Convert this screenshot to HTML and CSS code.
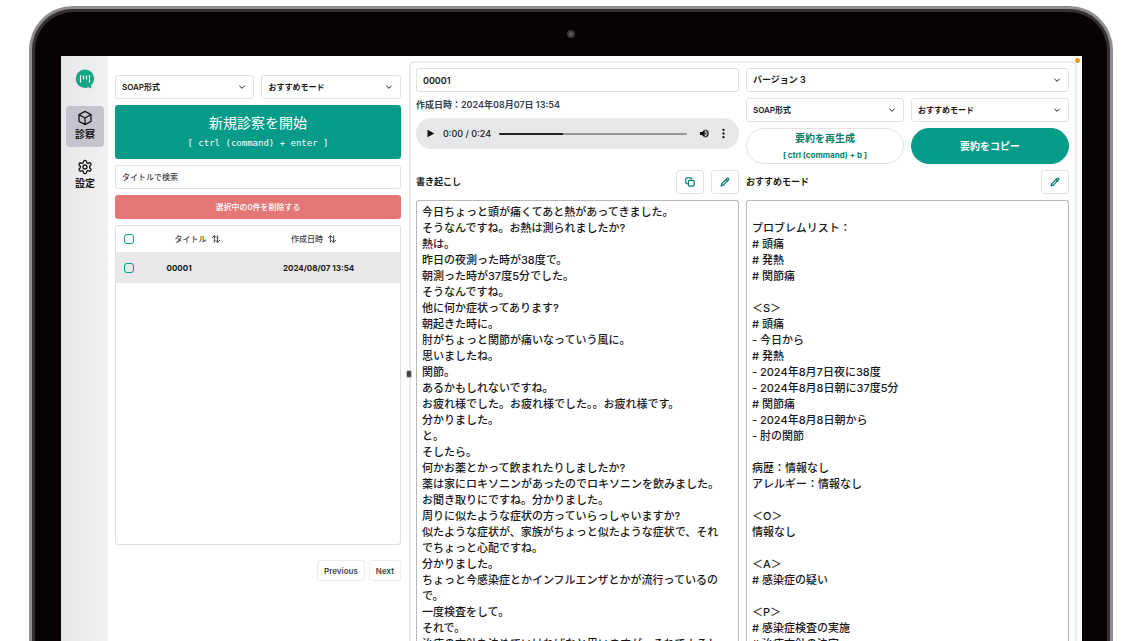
FILE: index.html
```html
<!DOCTYPE html>
<html lang="ja">
<head>
<meta charset="utf-8">
<meta name="viewport" content="width=device-width, initial-scale=1">
<title>診察</title>
<link rel="stylesheet" href="styles.css">
</head>
<body>
<svg class="defs" aria-hidden="true">
  <symbol id="chevron" viewBox="0 0 24 24"><path d="m5 9 7 7 7-7"/></symbol>
  <symbol id="pencil" viewBox="0 0 24 24"><path d="M17 3.500a2.500 2.500 0 0 1 3.500 3.500L8 19.500 2.500 21.500 4.500 16Z"/><path d="m14.500 6 3.500 3.500"/></symbol>
  <symbol id="sort" viewBox="0 0 24 24"><path d="m1 8 6-6 6 6M7 2v20M11 16l6 6 6-6M17 22V2"/></symbol>
</svg>
<div class="laptop">
  <span class="camera"></span>
  <div class="screen">
    <nav class="sidebar">
      <svg class="logo" viewBox="0 0 20 20" role="img" aria-label="ロゴ">
        <path d="M10 .5a9.200 9.200 0 1 0 3.500 17.700l3 1.300-.3-3.200A9.200 9.200 0 0 0 10 .5Z" fill="#12a883"/>
        <path d="M5.500 6v7.500M8.500 6.500v4M11.500 6.500v4M14.500 6v7.500" stroke="#fff" stroke-width="1.200" fill="none"/>
      </svg>
      <a class="nav-item active" href="#exam">
        <svg class="icon nav-icon" viewBox="0 0 24 24"><path d="M12 2 21 7v10l-9 5-9-5V7ZM3 7l9 5 9-5M12 12v10"/></svg>
        <span>診察</span>
      </a>
      <a class="nav-item" href="#settings">
        <svg class="icon nav-icon" viewBox="0 0 24 24"><path d="M12.220 2h-.44a2 2 0 0 0-2 2v.18a2 2 0 0 1-1 1.730l-.43.25a2 2 0 0 1-2 0l-.15-.08a2 2 0 0 0-2.730.73l-.22.38a2 2 0 0 0 .73 2.730l.15.1a2 2 0 0 1 1 1.720v.51a2 2 0 0 1-1 1.740l-.15.09a2 2 0 0 0-.73 2.730l.22.38a2 2 0 0 0 2.730.73l.15-.08a2 2 0 0 1 2 0l.43.25a2 2 0 0 1 1 1.730V20a2 2 0 0 0 2 2h.44a2 2 0 0 0 2-2v-.18a2 2 0 0 1 1-1.730l.43-.25a2 2 0 0 1 2 0l.15.08a2 2 0 0 0 2.730-.73l.22-.39a2 2 0 0 0-.73-2.730l-.15-.08a2 2 0 0 1-1-1.740v-.5a2 2 0 0 1 1-1.740l.15-.09a2 2 0 0 0 .73-2.730l-.22-.38a2 2 0 0 0-2.730-.73l-.15.08a2 2 0 0 1-2 0l-.43-.25a2 2 0 0 1-1-1.730V4a2 2 0 0 0-2-2z"/><circle cx="12" cy="12" r="3"/></svg>
        <span>設定</span>
      </a>
    </nav>

    <section class="list-pane">
      <div class="pair">
        <div class="select"><select aria-label="形式"><option>SOAP形式</option></select><svg class="icon chevron"><use href="#chevron"/></svg></div>
        <div class="select"><select aria-label="モード"><option>おすすめモード</option></select><svg class="icon chevron"><use href="#chevron"/></svg></div>
      </div>
      <button class="start" type="button"><span>新規診察を開始</span><kbd>[ ctrl (command) + enter ]</kbd></button>
      <input class="field search" type="text" placeholder="タイトルで検索" aria-label="タイトルで検索">
      <button class="delete" type="button">選択中の0件を削除する</button>
      <div class="table-box">
        <table>
          <thead>
            <tr>
              <th class="col-check"><input type="checkbox" aria-label="すべて選択"></th>
              <th class="col-title"><button class="sort" type="button">タイトル<svg class="icon sort-icon"><use href="#sort"/></svg></button></th>
              <th><button class="sort" type="button">作成日時<svg class="icon sort-icon"><use href="#sort"/></svg></button></th>
            </tr>
          </thead>
          <tbody>
            <tr><td class="col-check"><input type="checkbox" aria-label="00001を選択"></td><td>00001</td><td>2024/08/07 13:54</td></tr>
          </tbody>
        </table>
      </div>
      <div class="pager"><button type="button">Previous</button><button type="button">Next</button></div>
    </section>

    <main class="detail">
      <span class="handle"></span>
      <div class="top">
        <input class="field name" type="text" value="00001" aria-label="タイトル">
        <p class="created">作成日時：2024年08月07日 13:54</p>
        <div class="player">
          <button type="button" aria-label="再生"><svg viewBox="0 0 12 12" class="play"><path d="M2 1v10l9-5z"/></svg></button>
          <span class="time">0:00 / 0:24</span>
          <input type="range" min="0" max="100" value="0" aria-label="再生位置">
          <button type="button" aria-label="音量"><svg viewBox="0 0 24 24" class="volume"><path d="M2 8.500v7h4.500l6 5.500V3L6.500 8.500zM14 3.200v2.600a6.500 6.500 0 0 1 0 12.400v2.600a9 9 0 0 0 0-17.600zM14 8v8a4.500 4.500 0 0 0 0-8z"/></svg></button>
          <button type="button" aria-label="メニュー"><svg viewBox="0 0 24 24" class="volume"><circle cx="12" cy="4" r="2.500"/><circle cx="12" cy="12" r="2.500"/><circle cx="12" cy="20" r="2.500"/></svg></button>
        </div>
      </div>
      <div class="top">
        <div class="select version"><select aria-label="バージョン"><option>バージョン 3</option></select><svg class="icon chevron"><use href="#chevron"/></svg></div>
        <div class="pair">
          <div class="select"><select aria-label="要約形式"><option>SOAP形式</option></select><svg class="icon chevron"><use href="#chevron"/></svg></div>
          <div class="select"><select aria-label="要約モード"><option>おすすめモード</option></select><svg class="icon chevron"><use href="#chevron"/></svg></div>
        </div>
        <div class="pair">
          <button class="pill" type="button"><span>要約を再生成</span><small>[ ctrl (command) + b ]</small></button>
          <button class="pill primary" type="button">要約をコピー</button>
        </div>
      </div>
      <div class="heading">
        <label for="transcript">書き起こし</label>
        <button type="button" aria-label="コピー"><svg class="icon tool" viewBox="0 0 24 24"><rect x="8" y="8" width="14" height="14" rx="3.500"/><path d="M5 16a3 3 0 0 1-3-3V5a3 3 0 0 1 3-3h8a3 3 0 0 1 3 3"/></svg></button>
        <button type="button" aria-label="書き起こしを編集"><svg class="icon tool"><use href="#pencil"/></svg></button>
      </div>
      <div class="heading">
        <label for="summary">おすすめモード</label>
        <button type="button" aria-label="要約を編集"><svg class="icon tool"><use href="#pencil"/></svg></button>
      </div>
      <textarea id="transcript">今日ちょっと頭が痛くてあと熱があってきました。
そうなんですね。お熱は測られましたか?
熱は。
昨日の夜測った時が38度で。
朝測った時が37度5分でした。
そうなんですね。
他に何か症状ってあります?
朝起きた時に。
肘がちょっと関節が痛いなっていう風に。
思いましたね。
関節。
あるかもしれないですね。
お疲れ様でした。お疲れ様でした。。お疲れ様です。
分かりました。
と。
そしたら。
何かお薬とかって飲まれたりしましたか?
薬は家にロキソニンがあったのでロキソニンを飲みました。
お聞き取りにですね。分かりました。
周りに似たような症状の方っていらっしゃいますか?
似たような症状が、家族がちょっと似たような症状で、それでちょっと心配ですね。
分かりました。
ちょっと今感染症とかインフルエンザとかが流行っているので。
一度検査をして。
それで。
治療の方針を決めていければなと思いますが、それでよろしいですか?</textarea>
      <textarea id="summary">

プロブレムリスト：
# 頭痛
# 発熱
# 関節痛

＜S＞
# 頭痛
- 今日から
# 発熱
- 2024年8月7日夜に38度
- 2024年8月8日朝に37度5分
# 関節痛
- 2024年8月8日朝から
- 肘の関節

病歴：情報なし
アレルギー：情報なし

＜O＞
情報なし

＜A＞
# 感染症の疑い

＜P＞
# 感染症検査の実施
# 治療方針の決定</textarea>
    </main>
    <span class="mic-dot"></span>
  </div>
</div>
</body>
</html>
```
FILE: styles.css
```css
* { box-sizing: border-box; }

body {
  margin: 0;
  height: 100vh;
  overflow: hidden;
  display: flex;
  background: #fff;
  color: #18181b;
  font: 600 8px/12px Inter, "Noto Sans CJK JP", sans-serif;
}

button, input, select, textarea { font: inherit; color: inherit; }
button { margin: 0; padding: 0; border: 0; background: none; cursor: pointer; }
.defs { position: absolute; width: 0; height: 0; }

.icon {
  fill: none;
  stroke: currentColor;
  stroke-width: 2;
  stroke-linecap: round;
  stroke-linejoin: round;
}

/* Laptop frame, running off the bottom of the window */
.laptop {
  position: relative;
  flex: 1;
  display: flex;
  margin: 6px 27px -16px 29px;
  padding: 47px 28px 0 29px;
  border: 3px solid #8e8d91;
  border-bottom: 0;
  border-radius: 44px 44px 0 0;
  background: #080202;
  box-shadow: inset 0 0 0 3px #343033;
}

.camera {
  position: absolute;
  top: 21px;
  left: 50%;
  width: 8px;
  height: 8px;
  margin-left: -4px;
  border: 2px solid #3b3737;
  border-radius: 50%;
  background: #5a5656;
}

.screen {
  position: relative;
  flex: 1;
  min-width: 0;
  display: grid;
  grid-template-columns: 47px minmax(0, 309fr) minmax(0, 691fr);
  background: #fff;
}

.mic-dot {
  position: absolute;
  top: 2px;
  right: 2px;
  width: 5px;
  height: 5px;
  border-radius: 50%;
  background: #ef9a1a;
}

/* Sidebar */
.sidebar {
  display: flex;
  flex-direction: column;
  align-items: center;
  gap: 8px;
  padding: 13px 4px 0 5px;
  background: linear-gradient(90deg, #e7e7ea, #f1f1f3);
}

.logo { width: 20px; height: 20px; margin-bottom: 9px; }

.nav-item {
  align-self: stretch;
  display: flex;
  flex-direction: column;
  align-items: center;
  gap: 1px;
  height: 41px;
  padding-top: 4px;
  border-radius: 4px;
  color: #18181b;
  font-size: 10px;
  line-height: 14px;
  text-decoration: none;
}

.nav-item.active { background: #c4c5cc; }
.nav-icon { width: 16px; height: 16px; }

/* Shared controls */
.pair { display: grid; grid-template-columns: 1fr 1fr; gap: 7px; }
.select { display: grid; align-items: center; }
.select > * { grid-area: 1 / 1; }

.select select {
  width: 100%;
  height: 24px;
  padding: 0 20px 0 6px;
  appearance: none;
  border: 1px solid #e2e2e5;
  border-radius: 3px;
  background: #fff;
}

.version select { font-size: 9px; }

.chevron {
  justify-self: end;
  width: 8px;
  height: 8px;
  margin-right: 8px;
  stroke-width: 3;
  pointer-events: none;
}

.field {
  width: 100%;
  height: 24px;
  padding: 0 6px;
  border: 1px solid #e2e2e5;
  border-radius: 3px;
  background: #fff;
}

.search::placeholder { color: #3f3f46; font-weight: 500; opacity: 1; }

/* Consultation list */
.list-pane {
  display: flex;
  flex-direction: column;
  gap: 6px;
  padding: 19px 8px 0 7px;
}

.start {
  display: flex;
  flex-direction: column;
  align-items: center;
  justify-content: center;
  gap: 4px;
  height: 54px;
  border-radius: 3px;
  background: #049c89;
  color: #fff;
  font-size: 14px;
  font-weight: 400;
  line-height: 18px;
}

.start kbd { font: 400 9px/14px "DejaVu Sans Mono", monospace; }

.delete {
  height: 24px;
  border-radius: 3px;
  background: #e57676;
  color: #fff;
  font-weight: 500;
}

.table-box {
  height: 320px;
  border: 1px solid #dedee1;
  border-radius: 3px;
}

table { width: 100%; border-collapse: collapse; table-layout: fixed; }
th, td { padding: 0 8px; text-align: left; }
th { height: 26px; font-weight: 500; color: #3f3f46; }
td { height: 31px; background: #e8e8e8; font-weight: 700; }
.col-check { width: 15%; }
.col-title { width: 41%; }
.sort { display: flex; align-items: center; gap: 5px; padding: 0 8px; }
.sort-icon { width: 8px; height: 8px; stroke-width: 3; }

input[type="checkbox"] {
  display: block;
  width: 10px;
  height: 10px;
  margin: 0;
  appearance: none;
  border: 1px solid #049c89;
  border-radius: 3px;
}

.pager { display: flex; justify-content: flex-end; gap: 4px; padding-top: 9px; }

.pager button {
  height: 21px;
  padding: 0 6px;
  border: 1px solid #ececef;
  border-radius: 3px;
  color: #3f3f46;
}

/* Consultation detail */
.detail {
  position: relative;
  display: grid;
  grid-template-columns: minmax(0, 1fr) minmax(0, 1fr);
  grid-template-rows: auto auto 1fr;
  gap: 6px 7px;
  margin: 5px 5px 0 0;
  padding: 5px 6px 0 5px;
  border: 2px solid #ebebed;
  border-bottom: 0;
  border-radius: 5px 5px 0 0;
}

.handle {
  position: absolute;
  top: 307px;
  left: -5px;
  width: 6px;
  height: 8px;
  border: 1px solid #c6c6c9;
  border-radius: 2px;
  background: #444;
}

.top { display: flex; flex-direction: column; gap: 6px; }
.name { font-size: 9px; }
.created { margin: 0; font-size: 9px; line-height: 14px; color: #334155; }

.player {
  display: flex;
  align-items: center;
  gap: 8px;
  height: 31px;
  padding: 0 10px;
  border-radius: 16px;
  background: #e6e7e8;
}

.player button { display: flex; }
.player svg { width: 10px; height: 10px; fill: #111; }
.player .play { width: 9px; height: 9px; }
.player .volume { width: 11px; height: 11px; }
.time { font-size: 9px; font-weight: 500; }

.player input {
  flex: 1;
  min-width: 0;
  height: 2px;
  margin: 0 4px 0 0;
  appearance: none;
  border-radius: 1px;
  background: linear-gradient(90deg, #222 34%, #98999b 34%);
}

.player input::-webkit-slider-thumb { appearance: none; width: 0; height: 0; }

.pill {
  display: flex;
  flex-direction: column;
  align-items: center;
  justify-content: center;
  gap: 5px;
  height: 36px;
  border: 1px solid #e2e2e5;
  border-radius: 18px;
  color: #047f6c;
  font-size: 10px;
  font-weight: 700;
}

.pill small { font-size: 8px; }
.pill.primary { border-color: #049c89; background: #049c89; color: #fff; }

.heading { display: flex; align-items: center; gap: 7px; }
.heading label { flex: 1; font-size: 9px; }

.heading button {
  display: flex;
  align-items: center;
  justify-content: center;
  width: 28px;
  height: 24px;
  border: 1px solid #e2e2e5;
  border-radius: 3px;
  color: #047f6c;
}

.tool { width: 10px; height: 10px; stroke-width: 3; }

textarea {
  width: 100%;
  min-height: 448px;
  margin: 0;
  padding: 3px 10px 0 5px;
  resize: none;
  overflow: hidden;
  border: 1px solid #b9b9bc;
  border-bottom: 0;
  border-radius: 3px 3px 0 0;
  background: #fff;
  font-size: 11px;
  font-weight: 500;
  line-height: 16px;
}
```
